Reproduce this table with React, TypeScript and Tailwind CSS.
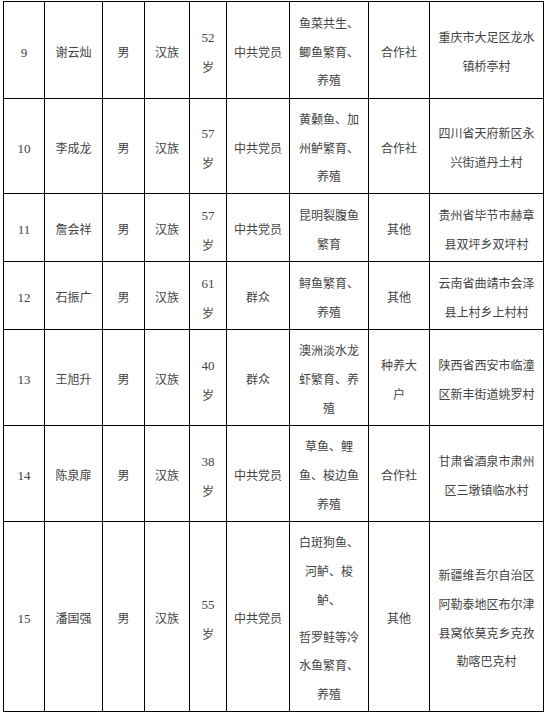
type Row = {
  no: string;
  name: string;
  age: string;
  party: string;
  breed: string[];
  gapAfter?: number;
  kind: string[];
  addr: string[];
  h: string;
};

const rows: Row[] = [
  {
    no: "9",
    name: "谢云灿",
    age: "52",
    party: "中共党员",
    breed: ["鱼菜共生、", "鲫鱼繁育、", "养殖"],
    kind: ["合作社"],
    addr: ["重庆市大足区龙水", "镇桥亭村"],
    h: "h-[97px]",
  },
  {
    no: "10",
    name: "李成龙",
    age: "57",
    party: "中共党员",
    breed: ["黄颡鱼、加", "州鲈繁育、", "养殖"],
    kind: ["合作社"],
    addr: ["四川省天府新区永", "兴街道丹土村"],
    h: "h-[95px]",
  },
  {
    no: "11",
    name: "詹会祥",
    age: "57",
    party: "中共党员",
    breed: ["昆明裂腹鱼", "繁育"],
    kind: ["其他"],
    addr: ["贵州省毕节市赫章", "县双坪乡双坪村"],
    h: "h-[68px]",
  },
  {
    no: "12",
    name: "石振广",
    age: "61",
    party: "群众",
    breed: ["鲟鱼繁育、", "养殖"],
    kind: ["其他"],
    addr: ["云南省曲靖市会泽", "县上村乡上村村"],
    h: "h-[68px]",
  },
  {
    no: "13",
    name: "王旭升",
    age: "40",
    party: "群众",
    breed: ["澳洲淡水龙", "虾繁育、养", "殖"],
    kind: ["种养大", "户"],
    addr: ["陕西省西安市临潼", "区新丰街道姚罗村"],
    h: "h-[96px]",
  },
  {
    no: "14",
    name: "陈泉扉",
    age: "38",
    party: "中共党员",
    breed: ["草鱼、鲤", "鱼、梭边鱼", "养殖"],
    kind: ["合作社"],
    addr: ["甘肃省酒泉市肃州", "区三墩镇临水村"],
    h: "h-[96px]",
  },
  {
    no: "15",
    name: "潘国强",
    age: "55",
    party: "中共党员",
    breed: ["白斑狗鱼、", "河鲈、梭", "鲈、", "哲罗鲑等冷", "水鱼繁育、", "养殖"],
    gapAfter: 2,
    kind: ["其他"],
    addr: ["新疆维吾尔自治区", "阿勒泰地区布尔津", "县窝依莫克乡克孜", "勒喀巴克村"],
    h: "h-[190px]",
  },
];

function Cell({ h, children }: { h: string; children: React.ReactNode }) {
  return (
    <div
      className={`${h} flex items-center justify-center text-center border-r border-b border-black pt-[6px]`}
    >
      <div>{children}</div>
    </div>
  );
}

function Lines({ items, gapAfter }: { items: string[]; gapAfter?: number }) {
  return (
    <>
      {items.map((t, i) => (
        <div key={i} className={i === gapAfter ? "mb-[8px]" : ""}>
          {t}
        </div>
      ))}
    </>
  );
}

export default function App() {
  return (
    <div className="min-h-[716px] bg-white pt-[1px] pl-[3px] text-[12px] leading-[28.8px] text-[#444] font-['Liberation_Serif','Noto_Sans_CJK_SC',serif]">
      <div className="grid w-fit grid-cols-[41px_58px_42px_45px_37px_63px_79px_61px_114px] border-l border-t border-black">
        {rows.map((r) => (
          <div key={r.no} className="contents">
            <Cell h={r.h}>
              <span className="text-[13px]">{r.no}</span>
            </Cell>
            <Cell h={r.h}>{r.name}</Cell>
            <Cell h={r.h}>男</Cell>
            <Cell h={r.h}>汉族</Cell>
            <Cell h={r.h}>
              <div className="leading-[30px]">
                <div className="text-[13px]">{r.age}</div>
                <div>岁</div>
              </div>
            </Cell>
            <Cell h={r.h}>{r.party}</Cell>
            <Cell h={r.h}>
              <Lines items={r.breed} gapAfter={r.gapAfter} />
            </Cell>
            <Cell h={r.h}>
              <Lines items={r.kind} />
            </Cell>
            <Cell h={r.h}>
              <Lines items={r.addr} />
            </Cell>
          </div>
        ))}
      </div>
    </div>
  );
}
